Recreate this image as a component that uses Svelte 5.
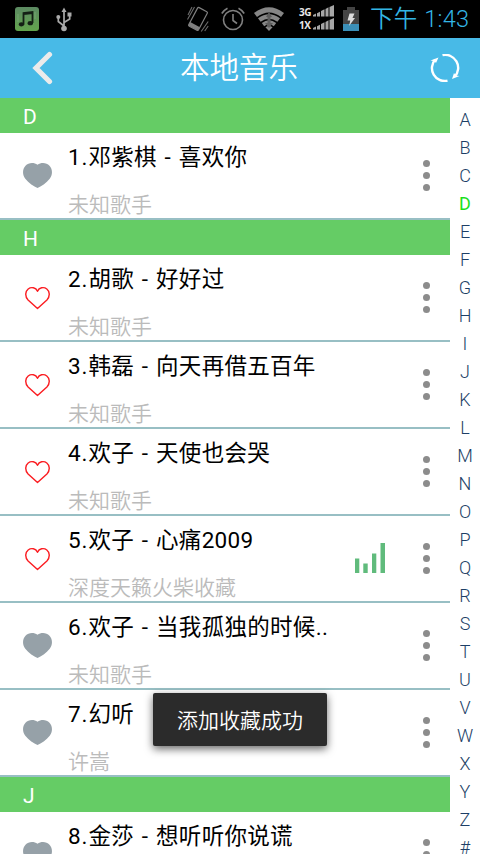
<script>
  let songs = $state([
    { letter: 'D', items: [{ id: 1, title: '邓紫棋 - 喜欢你', artist: '未知歌手', liked: false }] },
    {
      letter: 'H',
      items: [
        { id: 2, title: '胡歌 - 好好过', artist: '未知歌手', liked: true },
        { id: 3, title: '韩磊 - 向天再借五百年', artist: '未知歌手', liked: true },
        { id: 4, title: '欢子 - 天使也会哭', artist: '未知歌手', liked: true },
        { id: 5, title: '欢子 - 心痛2009', artist: '深度天籁火柴收藏', liked: true },
        { id: 6, title: '欢子 - 当我孤独的时候..', artist: '未知歌手', liked: false },
        { id: 7, title: '幻听', artist: '许嵩', liked: false }
      ]
    },
    { letter: 'J', items: [{ id: 8, title: '金莎 - 想听听你说谎', artist: '未知歌手', liked: false }] }
  ])

  const letters = 'ABCDEFGHIJKLMNOPQRSTUVWXYZ#'.split('')
  let current = $state('D')
  let playing = $state(5)
  let toast = $state('添加收藏成功')
</script>

<div class="screen">
  <div class="status">
    <svg class="music" width="24" height="24" viewBox="0 0 24 24">
      <defs>
        <linearGradient id="cover" x1="0" y1="0" x2="0" y2="1">
          <stop offset="0" stop-color="#5c8a62" />
          <stop offset="1" stop-color="#62a44d" />
        </linearGradient>
      </defs>
      <rect width="24" height="24" rx="3" fill="url(#cover)" />
      <path d="M3 7v8M20 5v7" stroke="#73a572" stroke-width="2" opacity=".5" />
      <path d="M8.500 17V6l9-1v11M8.500 7.200l9-1" fill="none" stroke="#142015" stroke-width="1.8" />
      <ellipse cx="6.500" cy="17.3" rx="2.7" ry="2.1" fill="#142015" />
      <ellipse cx="15.3" cy="16.2" rx="2.7" ry="2.1" fill="#142015" />
    </svg>
    <svg class="usb" width="18" height="25" viewBox="0 0 18 25">
      <g fill="none" stroke="#aaa" stroke-width="1.7">
        <path d="M9 4v17M9 19l-5.700-4.500v-4M9 15.500l5.700-3.500V8" />
      </g>
      <g fill="#aaa">
        <path d="M9 .5l2.500 4.500h-5z" />
        <circle cx="9" cy="21.500" r="2.800" />
        <circle cx="3.300" cy="10" r="2" />
        <path d="M12.500 5.500h4v4h-4z" />
      </g>
    </svg>
    <svg class="vibrate" width="22" height="26" viewBox="0 0 22 26">
      <g transform="rotate(28 11 13)">
        <rect x="5.500" y="2.400" width="11" height="21" rx="1.200" fill="none" stroke="#808080" stroke-width="1.200" />
        <path d="M5.500 19.300h11v4h-11z" fill="#808080" />
      </g>
      <path d="M1 9l4-8M.5 13.500L7.500 1M21.200 15.500l-7 10M21.200 20l-3.500 5" stroke="#6d6d6d" stroke-width="1.100" />
    </svg>
    <svg class="alarm" width="24" height="24" viewBox="0 0 24 24" fill="none" stroke="#808080" stroke-width="1.600">
      <circle cx="12" cy="13" r="9.500" />
      <path d="M12 7v6.500l4 3M.8 6.500Q3 3 6.500 1.200M23.200 6.500Q21 3 17.500 1.200" />
    </svg>
    <svg class="wifi" width="32" height="24" viewBox="0 0 32 24">
      <path d="M1 6Q16-5.500 31 6l-3 4Q16 1 4 10zM5 11.300Q16 3 27 11.300l-2.600 3.500Q16 8.500 7.600 14.800zM8.800 16Q16 10.500 23.200 16l-2.400 3.200Q16 15.500 11.200 19.200zM12.400 20.300Q16 17.500 19.600 20.300L16 24z" fill="#868686" />
      <path d="M16 5l3 5h-1.500v6H20l-4 5-4-5h2.500v-6H13z" fill="#5d5d5d" />
    </svg>
    <div class="mobile">
      {#each ['3G', '1X'] as net}
        <div class="net">
          <span>{net}</span>
          <svg width="21" height="12" viewBox="0 0 21 12" fill="#a6a6a6">
            <path d="M0 11.500V10l3-1.500v3zM4 11.500V8.300l3-1.500v4.700zM8 11.500V6l3.500-1.800v7.300zM12.500 11.500V4l3-1.700v9.200zM16.500 11.500V2L21 0v11.500z" />
          </svg>
        </div>
      {/each}
    </div>
    <svg class="battery" width="16" height="24" viewBox="0 0 16 24">
      <path d="M0 3h4V0h8v3h4v21H0z" fill="#444" />
      <path d="M0 17h16v7H0z" fill="#3b8fb7" />
      <path d="M6.500 6.500h5l-2 4.500h2.500l-6 8 1.300-5.500H4.500z" fill="#ddd" />
    </svg>
    <span class="clock">下午 1:43</span>
  </div>

  <header>
    <svg class="back" width="22" height="34" viewBox="0 0 22 34">
      <path d="M17.500 3.500L4 17l13.500 13.500" fill="none" stroke="#ebebeb" stroke-width="5.200" stroke-linecap="round" />
    </svg>
    <h1>本地音乐</h1>
    <svg class="refresh" width="30" height="28" viewBox="0 0 30 28">
      <g fill="none" stroke="#fff" stroke-width="2.400">
        <path d="M17.500 26.700A12.900 12.900 0 0 1 5.200 5.500" />
        <path d="M12.500 1.200A12.900 12.900 0 0 1 24.800 22.500" />
      </g>
      <path d="M.5 6.500L8.500 3.500 6 9 4.500 7.200zM29.500 22L22 25l2-6 1.800 2.500z" fill="#fff" />
    </svg>
  </header>

  <main>
    <div class="list">
      {#each songs as group}
        <h2>{group.letter}</h2>
        {#each group.items as song (song.id)}
          <div class="row">
            <button class="heart" aria-label="like" onclick={() => (song.liked = !song.liked)}>
              {#if song.liked}
                <svg width="25" height="24" viewBox="0 0 26 24">
                  <path d="M13 23L3.200 14C-.3 10.500.2 5 3.300 2.600 6.500.2 11.300 1 13 5 14.700 1 19.500.2 22.700 2.600c3.100 2.400 3.600 7.900.1 11.400z" fill="none" stroke="#fb1d22" stroke-width="1.500" stroke-linejoin="round" />
                </svg>
              {:else}
                <svg width="29" height="25" viewBox="0 0 29 25">
                  <path d="M14.500 1.800C18-.8 23.500-.5 26.500 2.700c3.500 4 3 9.300.2 13C23.500 20 18 23.500 14.500 25 11 23.500 5.500 20 2.300 15.700-.5 12-1 6.700 2.500 2.700 5.500-.5 11-.8 14.500 1.800z" fill="#96a1a8" />
                </svg>
              {/if}
            </button>
            <div class="info">
              <p class="title"><span>{song.id}.</span>{song.title}</p>
              <p class="artist">{song.artist}</p>
            </div>
            {#if song.id === playing}
              <svg class="bars" width="30" height="30" viewBox="0 0 30 30" fill="#60bb7c">
                <path d="M0 15.500h4.300V30H0zM8.300 20.500h4.400V30H8.300zM17 10.500h4.300V30H17zM25.500 0H30v30h-4.500z" />
              </svg>
            {/if}
            <svg class="more" width="7" height="31" viewBox="0 0 7 31" fill="#8c8c8c">
              <circle cx="3.500" cy="3.500" r="3.500" />
              <circle cx="3.500" cy="15.500" r="3.500" />
              <circle cx="3.500" cy="27.500" r="3.500" />
            </svg>
          </div>
        {/each}
      {/each}
    </div>
    <nav>
      {#each letters as l}
        <button class:active={l === current} onclick={() => (current = l)}>{l}</button>
      {/each}
    </nav>
  </main>

  {#if toast}
    <div class="toast">{toast}</div>
  {/if}
</div>

<style>
  :global(body) {
    margin: 0;
  }

  .screen {
    position: relative;
    display: flex;
    flex-direction: column;
    width: 480px;
    height: 854px;
    overflow: hidden;
    background: #fff;
    font-family: Roboto, 'Noto Sans CJK SC', sans-serif;
  }

  h1,
  h2,
  p {
    margin: 0;
    font-weight: 350;
  }

  svg {
    display: block;
    flex: none;
  }

  button {
    padding: 0;
    border: none;
    background: none;
    font: inherit;
  }

  .status {
    display: flex;
    flex: none;
    align-items: center;
    height: 38px;
    background: #000;
  }

  .music {
    margin-left: 15px;
  }

  .usb {
    margin-left: 16px;
  }

  .vibrate {
    margin-left: 114px;
  }

  .alarm {
    margin-left: 12px;
  }

  .wifi {
    margin-left: 8px;
  }

  .mobile {
    display: flex;
    flex-direction: column;
    gap: 1px;
    margin: -4px 0 0 14px;
  }

  .net {
    display: flex;
    align-items: flex-end;
    gap: 2px;
    height: 12px;
  }

  .net span {
    width: 12px;
    color: #e8e8e8;
    font: bold 10px/10px 'Open Sans', sans-serif;
    letter-spacing: -0.5px;
  }

  .battery {
    margin: 0 0 0 9px;
  }

  .clock {
    margin-left: 11px;
    color: #33b5e5;
    font-size: 23.5px;
    font-weight: 350;
    line-height: 38px;
    letter-spacing: 0.2px;
    word-spacing: 1px;
    white-space: nowrap;
  }

  header {
    display: flex;
    flex: none;
    align-items: center;
    justify-content: space-between;
    height: 60px;
    padding: 0 20px 0 32px;
    background: #48bae7;
  }

  h1 {
    margin-right: 6px;
    color: #fff;
    font-size: 29.5px;
    line-height: 62px;
  }

  main {
    display: flex;
    flex: 1;
    min-height: 0;
  }

  .list {
    width: 450px;
    overflow: hidden;
  }

  h2 {
    height: 35px;
    padding-left: 23px;
    background: #65cc65;
    color: #fff;
    font-size: 21px;
    font-weight: 400;
    line-height: 38px;
  }

  .row {
    display: flex;
    align-items: center;
    height: 85px;
    padding-right: 20px;
    border-bottom: 2px solid #98bfc4;
  }

  .heart {
    display: flex;
    justify-content: center;
    width: 37px;
    margin: 0 12px 0 19px;
  }

  .info {
    flex: 1;
    height: 85px;
    white-space: nowrap;
  }

  .title {
    height: 48px;
    color: #000;
    font-size: 22.5px;
    font-weight: 400;
    line-height: 49px;
    letter-spacing: 0.3px;
    word-spacing: 1.9px;
  }

  .title span {
    letter-spacing: 0.9px;
  }

  .artist {
    color: #bbb;
    font-size: 21px;
    line-height: 48px;
  }

  .bars {
    margin: 0 38px 1px 0;
  }

  nav {
    display: flex;
    flex-direction: column;
    width: 30px;
    padding-top: 8px;
  }

  nav button {
    flex: none;
    height: 28px;
    color: #1d3f66;
    font-size: 18px;
    font-weight: 350;
    line-height: 28px;
  }

  nav .active {
    color: #1be01b;
    font-weight: 400;
  }

  .toast {
    position: absolute;
    top: 693px;
    left: 153px;
    width: 174px;
    height: 53px;
    border-radius: 2px;
    background: #2b2b2b;
    box-shadow: 0 3px 9px rgba(0, 0, 0, 0.6);
    color: #fff;
    font-size: 21px;
    font-weight: 350;
    line-height: 56px;
    text-align: center;
  }
</style>
